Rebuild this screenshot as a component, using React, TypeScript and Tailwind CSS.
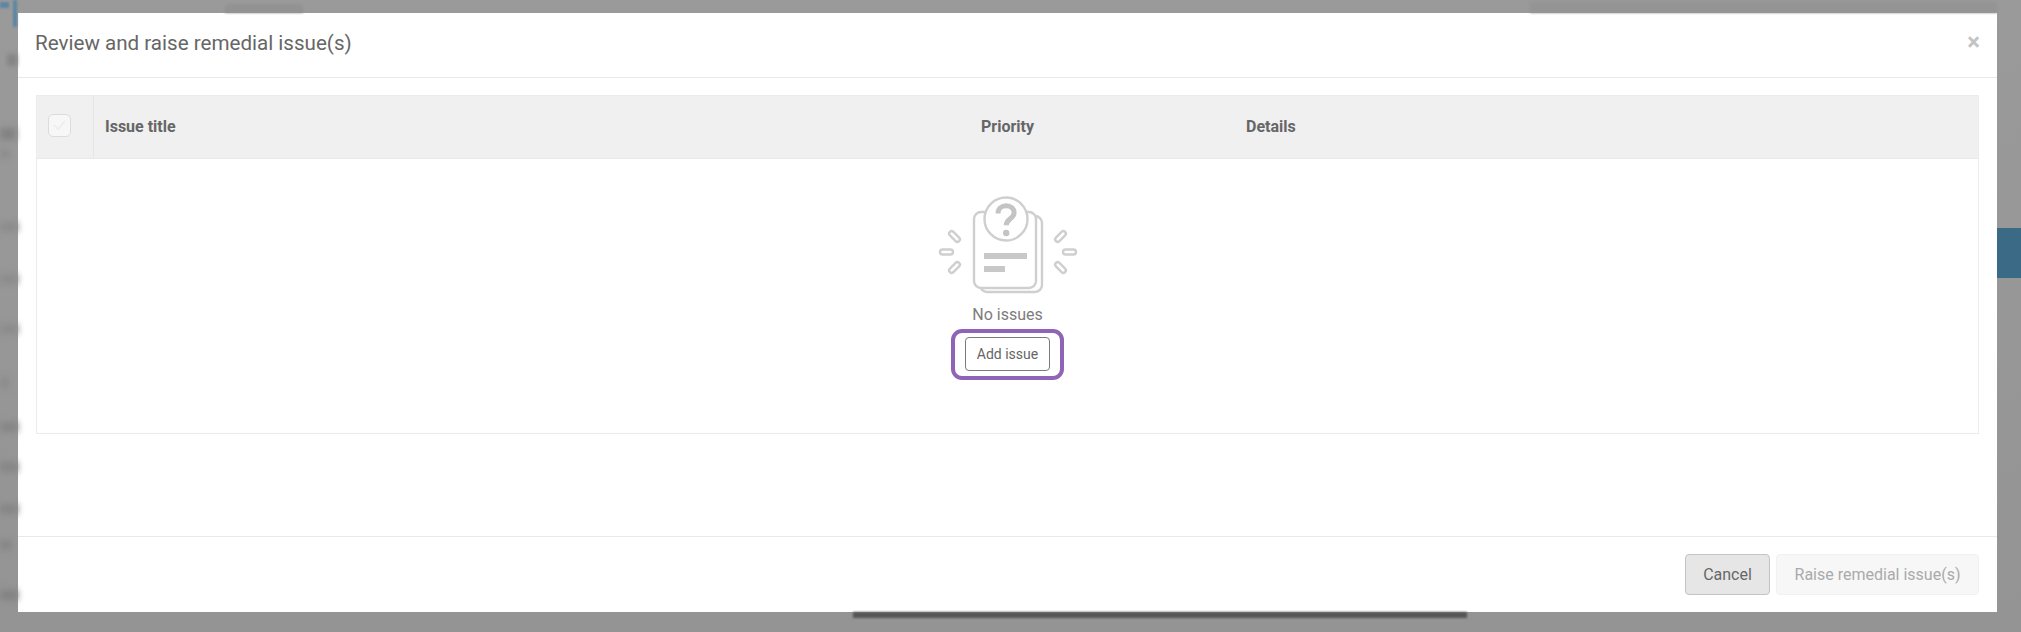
function EmptyIcon() {
  return (
    <svg width="145" height="100" viewBox="935 195 145 100" fill="none" stroke="#cfcfcf" strokeWidth="2.4">
      {/* sheets */}
      <rect x="980" y="216" width="62" height="76" rx="7" fill="#fff" />
      <rect x="974" y="212" width="62" height="76" rx="7" fill="#fff" />
      <circle cx="1006" cy="219" r="21.5" fill="#fff" />
      <path d="M998 213.5c0-4.8 3.6-7.8 8.1-7.8 4.5 0 8 2.9 8 7 0 6-7.9 6.2-7.9 12.6" stroke="#c4c4c4" strokeWidth="5" />
      <circle cx="1006.2" cy="233" r="3.2" fill="#c4c4c4" stroke="none" />
      <rect x="984" y="253" width="43" height="6" fill="#c8c8c8" stroke="none" />
      <rect x="984" y="266" width="21" height="6" fill="#c8c8c8" stroke="none" />
      {/* rays */}
      <rect x="940" y="249.5" width="13" height="5" rx="2.5" />
      <rect x="1063" y="249.5" width="13" height="5" rx="2.5" />
      <rect x="948" y="234" width="13" height="5" rx="2.5" transform="rotate(45 954.5 236.5)" />
      <rect x="948" y="265" width="13" height="5" rx="2.5" transform="rotate(-45 954.5 267.5)" />
      <rect x="1054" y="234" width="13" height="5" rx="2.5" transform="rotate(-45 1060.5 236.5)" />
      <rect x="1054" y="265" width="13" height="5" rx="2.5" transform="rotate(45 1060.5 267.5)" />
    </svg>
  );
}

export default function App() {
  return (
    <div className="flex h-[632px] overflow-hidden bg-linear-to-b from-[#9a9a9a] to-[#949494] font-['Roboto',sans-serif]">
      {/* left edge of the page behind the backdrop */}
      <div className="flex w-[18px] shrink-0 flex-col">
        <div className="flex h-[27px] items-start gap-[4px]">
          <div className="mt-[2px] h-[6px] w-[9px] bg-[#5c86a2] blur-[1px]" />
          <div className="h-[27px] w-[4px] bg-[#5c86a2] blur-[1px]" />
        </div>
        <div className="ml-[7px] mt-[27px] h-[12px] w-[10px] bg-[#858585] blur-[2px]" />
        <div className="mt-[62px] h-[12px] w-[16px] bg-[#828282] blur-[3px]" />
        <div className="mt-[10px] h-[8px] w-[10px] bg-[#8a8a8a] blur-[3px]" />
        <div className="mt-[64px] h-[10px] w-[18px] bg-[#8c8c8c] blur-[3px]" />
        <div className="mt-[42px] h-[10px] w-[18px] bg-[#8c8c8c] blur-[3px]" />
        <div className="mt-[40px] h-[10px] w-[18px] bg-[#8c8c8c] blur-[3px]" />
        <div className="mt-[44px] h-[10px] w-[10px] bg-[#8c8c8c] blur-[3px]" />
        <div className="mt-[34px] h-[10px] w-[18px] bg-[#868686] blur-[3px]" />
        <div className="mt-[30px] h-[10px] w-[18px] bg-[#868686] blur-[3px]" />
        <div className="mt-[32px] h-[10px] w-[18px] bg-[#868686] blur-[3px]" />
        <div className="mt-[26px] h-[10px] w-[12px] bg-[#868686] blur-[3px]" />
        <div className="mt-[40px] h-[10px] w-[18px] bg-[#828282] blur-[3px]" />
      </div>

      <div className="flex w-[1979px] shrink-0 flex-col">
        {/* top of the page behind the backdrop */}
        <div className="flex h-[13px] shrink-0 items-end justify-between">
          <div className="ml-[207px] h-[9px] w-[78px] rounded-t-[4px] bg-[#929292] blur-[1px]" />
          <div className="h-[11px] w-[467px] bg-[#949494] blur-[1px]" />
        </div>

        <div className="flex h-[599px] shrink-0 flex-col bg-white">
          <header className="flex h-[65px] shrink-0 items-center justify-between border-b border-[#e9e9e9] pb-[4px] pl-[17px] pr-[17px]">
            <h4 className="text-[20.6px] font-normal text-[#666666]">Review and raise remedial issue(s)</h4>
            <span className="mb-[3px] text-[24px] leading-none font-bold text-[#c4c4c4]">×</span>
          </header>

          <div className="flex-1 px-[18px] pt-[17px]">
            <div className="flex h-[339px] flex-col border border-[#ececec]">
              <div className="flex h-[63px] shrink-0 items-center border-b border-[#e9e9e9] bg-[#f0f0f0] text-[16px] font-bold text-[#666666]">
                <div className="flex h-full w-[57px] shrink-0 items-center border-r border-[#e6e6e6] pb-[4px] pl-[11px]">
                  <span className="flex h-[23px] w-[23px] items-center justify-center rounded-[5px] border border-[#dcdcdc] bg-[#f7f7f7]">
                    <svg width="13" height="10" viewBox="0 0 13 10" fill="none" stroke="#ececec" strokeWidth="1.5">
                      <path d="M1 5l4 4 7-8" />
                    </svg>
                  </span>
                </div>
                <div className="w-[887px] shrink-0 pl-[11px]">Issue title</div>
                <div className="w-[265px] shrink-0">Priority</div>
                <div>Details</div>
              </div>

              <div className="flex flex-1 flex-col items-center pt-[36px]">
                <EmptyIcon />
                <p className="mt-[10px] text-[16px] leading-[20px] text-[#7c7c7c]">No issues</p>
                <div className="mt-[4px] rounded-[11px] border-[4px] border-[#8f63b5] px-[10px] pb-[5px] pt-[4px]">
                  <button className="h-[34px] w-[85px] rounded-[4px] border border-[#7a7a7a] bg-white text-[14px] text-[#666666]">
                    Add issue
                  </button>
                </div>
              </div>
            </div>
          </div>

          <footer className="flex h-[76px] shrink-0 items-start justify-end gap-[6px] border-t border-[#e9e9e9] pr-[18px] pt-[17px]">
            <button className="h-[41px] w-[85px] rounded-[4px] border border-[#c4c4c4] bg-[#e6e6e6] text-[16px] text-[#666666]">
              Cancel
            </button>
            <button className="h-[41px] w-[203px] rounded-[4px] border border-[#f1f1f1] bg-[#f7f7f7] text-[16px] text-[#aaaaaa]">
              Raise remedial issue(s)
            </button>
          </footer>
        </div>

        {/* bar of the page that sticks out under the modal */}
        <div className="ml-[835px] h-[6px] w-[614px] shrink-0 bg-[#555555] blur-[1px]" />
      </div>

      {/* right edge of the page behind the backdrop */}
      <div className="flex flex-1 flex-col pt-[228px]">
        <div className="h-[50px] bg-[#3a6a85] blur-[0.5px]" />
      </div>
    </div>
  );
}
